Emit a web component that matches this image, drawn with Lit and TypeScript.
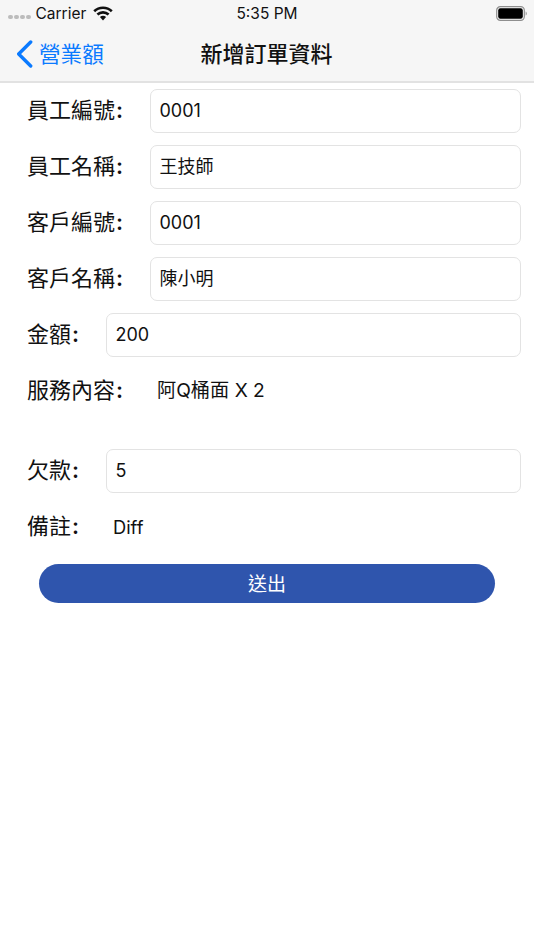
import { LitElement, html, css } from "lit";
import { customElement } from "lit/decorators.js";

const FIELDS_TOP = [
  { label: "員工編號", value: "0001", cjk: false },
  { label: "員工名稱", value: "王技師", cjk: true },
  { label: "客戶編號", value: "0001", cjk: false },
  { label: "客戶名稱", value: "陳小明", cjk: true },
];

@customElement("app-root")
export class AppRoot extends LitElement {
  static styles = css`
    :host {
      display: block;
      width: 534px;
      height: 950px;
      background: #fff;
      color: #111;
      font-family: Inter, "Noto Sans CJK TC", "Noto Sans CJK SC", sans-serif;
      overflow: hidden;
    }
    .header {
      background: #f6f6f6;
      border-bottom: 2px solid #e2e2e2;
      height: 81px;
      display: flex;
      flex-direction: column;
    }
    .status {
      height: 27px;
      display: grid;
      grid-template-columns: 1fr auto 1fr;
      align-items: center;
      font-size: 15.5px;
      padding: 0 7px 0 8px;
    }
    .status-left { display: flex; align-items: center; gap: 5px; }
    .dots { display: flex; gap: 1.5px; margin-top: 7px; }
    .dots i { width: 4.5px; height: 4.5px; border-radius: 50%; background: #bcbcbc; display: block; }
    .carrier { margin-right: 2px; }
    .time { margin-left: -1px; }
    .status-right { justify-self: end; display: flex; }
    .nav {
      flex: 1;
      display: grid;
      grid-template-columns: 1fr auto 1fr;
      align-items: center;
      padding-bottom: 4px;
    }
    .back {
      display: flex;
      align-items: center;
      gap: 5px;
      padding-left: 17px;
      color: #0a7aff;
      font-size: 21.6px;
    }
    .chevron { margin-top: 3px; }
    .title { font-size: 22px; font-weight: 500; color: #111; margin-left: -1px; }
    .form {
      display: flex;
      flex-direction: column;
      padding: 6px 13px 0 27px;
    }
    .row {
      display: flex;
      align-items: center;
      height: 44px;
      margin-bottom: 12px;
      font-size: 22px;
    }
    .label { flex: none; white-space: nowrap; padding-bottom: 6px; }
    .label.long { width: 123px; }
    .label.short { width: 79px; }
    .colon { margin-left: 1px; font-weight: 600; }
    .box {
      flex: 1;
      height: 44px;
      box-sizing: border-box;
      border: 1px solid #e3e3e3;
      border-radius: 7px;
      padding: 0 9px 1px 8.5px;
      display: flex;
      align-items: center;
      font-size: 18px;
    }
    .box.cjk { padding-bottom: 5px; }
    .plain { font-size: 18.3px; }
    .plain.service { font-size: 19.2px; padding-left: 7px; padding-bottom: 4px; }
    .plain.note { padding-left: 7px; }
    .gap-after { margin-bottom: 36px; }
    .note-row { margin-bottom: 15px; }
    .submit {
      align-self: stretch;
      margin: 0 26px 0 12px;
      height: 39px;
      border: none;
      border-radius: 20px;
      background: #2f55ad;
      color: #fff;
      font: inherit;
      font-size: 19px;
      padding: 0 0 3px;
    }
  `;

  private label(text: string, size: string) {
    return html`<span class="label ${size}">${text}<span class="colon">:</span></span>`;
  }

  render() {
    return html`
      <div class="header">
        <div class="status">
          <div class="status-left">
            <span class="dots"><i></i><i></i><i></i><i></i></span>
            <span class="carrier">Carrier</span>
            <svg width="20" height="15" viewBox="0 0 20 15">
              <path fill="none" stroke="#111" stroke-width="2.6" d="M1.2 5.2C6 .6 14 .6 18.8 5.2M4.4 8.5C7.5 5.6 12.5 5.6 15.6 8.5"/>
              <path fill="#111" d="M6.9 11 10 14.5 13.1 11C11.3 9.4 8.7 9.4 6.9 11Z"/>
            </svg>
          </div>
          <div class="time">5:35 PM</div>
          <div class="status-right">
            <svg width="31" height="15" viewBox="0 0 31 15">
              <rect x="0.7" y="0.7" width="27.6" height="13.6" rx="3.6" fill="none" stroke="#8e8e8e" stroke-width="1.2"/>
              <rect x="2.2" y="2.2" width="24.6" height="10.6" rx="2.2" fill="#000"/>
              <path d="M29.6 5.4c.8.3 1.2 1.1 1.2 2.1s-.4 1.8-1.2 2.1z" fill="#9a9a9a"/>
            </svg>
          </div>
        </div>
        <div class="nav">
          <div class="back">
            <svg class="chevron" width="17" height="28" viewBox="0 0 17 28">
              <path fill="none" stroke="#0a7aff" stroke-width="3.4" stroke-linecap="round" stroke-linejoin="round" d="M13.7 2 1.7 14l12 12"/>
            </svg>
            <span>營業額</span>
          </div>
          <div class="title">新增訂單資料</div>
          <div></div>
        </div>
      </div>
      <div class="form">
        ${FIELDS_TOP.map(
          (f) => html`<div class="row">
            ${this.label(f.label, "long")}
            <div class="box ${f.cjk ? "cjk" : ""}">${f.value}</div>
          </div>`
        )}
        <div class="row">
          ${this.label("金額", "short")}
          <div class="box">200</div>
        </div>
        <div class="row gap-after">
          ${this.label("服務內容", "long")}
          <span class="plain service">阿Q桶面 X 2</span>
        </div>
        <div class="row">
          ${this.label("欠款", "short")}
          <div class="box">5</div>
        </div>
        <div class="row note-row">
          ${this.label("備註", "short")}
          <span class="plain note">Diff</span>
        </div>
        <button class="submit">送出</button>
      </div>
    `;
  }
}
